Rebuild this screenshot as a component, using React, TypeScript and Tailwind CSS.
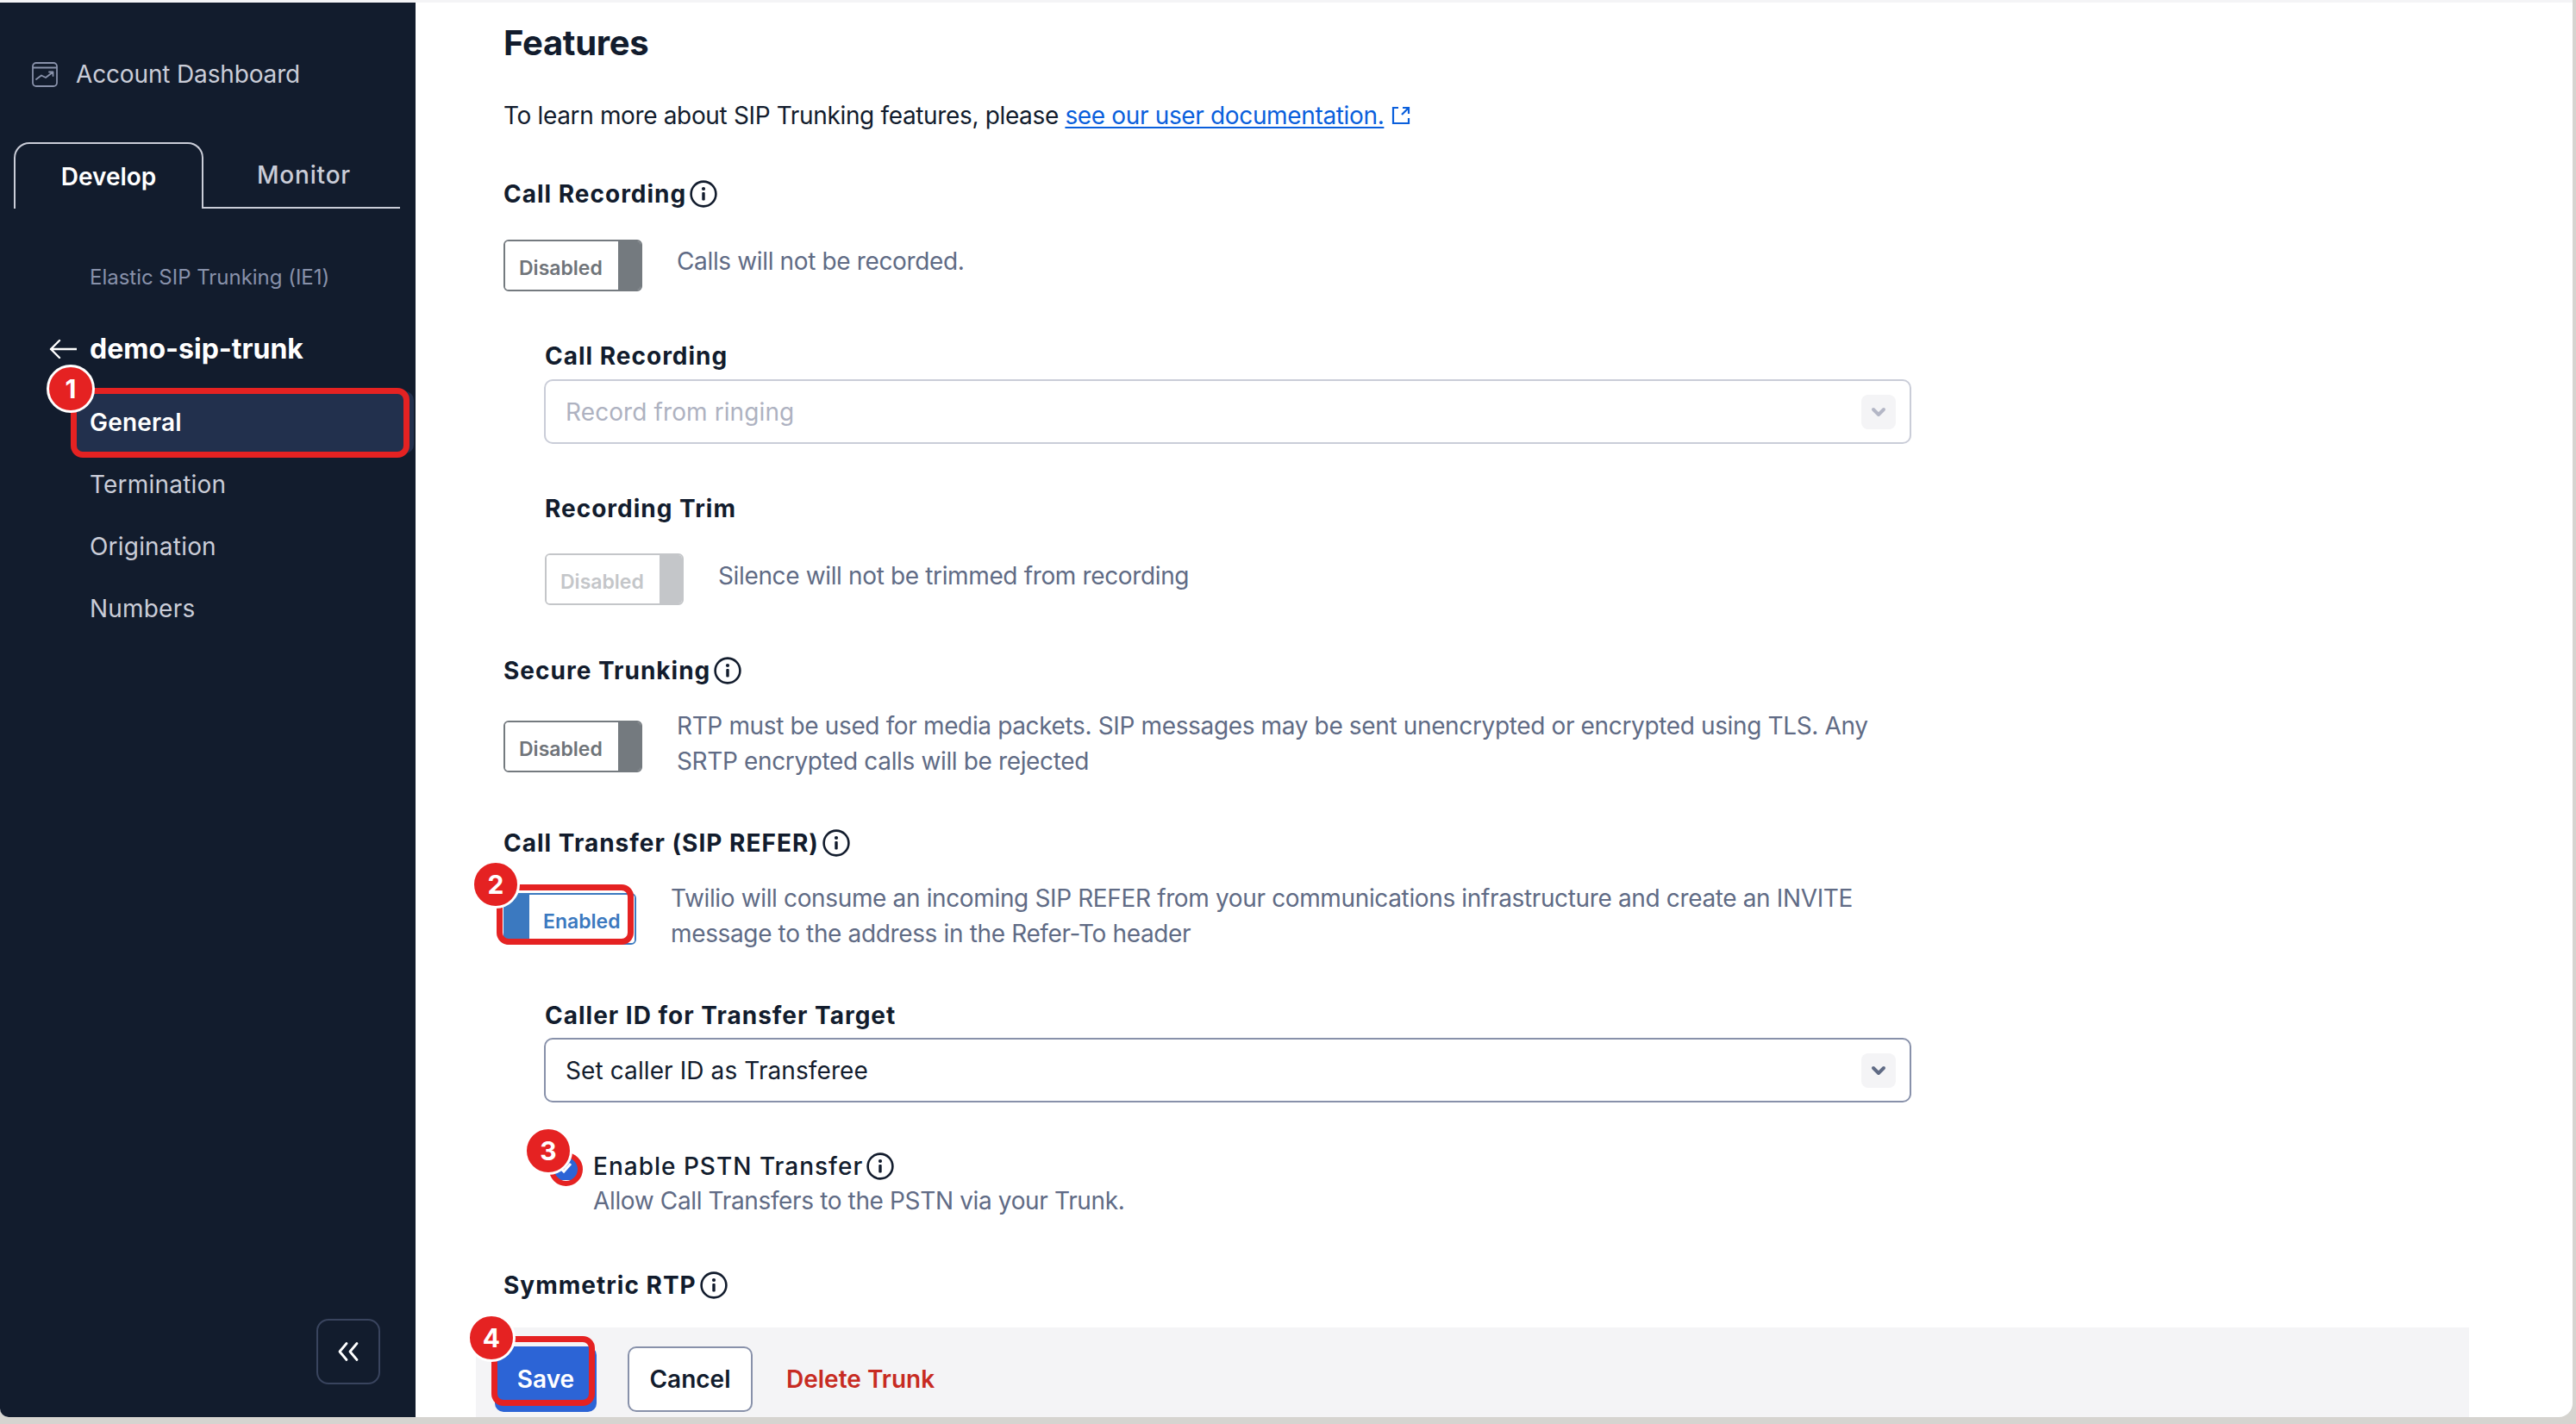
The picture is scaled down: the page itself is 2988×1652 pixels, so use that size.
import React from "react";

const Info = () => (
  <svg viewBox="0 0 32 32" className="w-[32px] h-[32px] shrink-0" fill="none">
    <circle cx="16" cy="16" r="14.4" stroke="#121c2d" strokeWidth="2.6" />
    <rect x="14.3" y="14" width="3.4" height="9.5" rx="1" fill="#121c2d" />
    <circle cx="16" cy="10" r="2.1" fill="#121c2d" />
  </svg>
);

const Chevron = ({ color }: { color: string }) => (
  <svg viewBox="0 0 20 14" className="w-[18px] h-[12px]" fill="none">
    <path d="M3 3.5l7 7 7-7" stroke={color} strokeWidth="4.6" strokeLinecap="round" strokeLinejoin="round" />
  </svg>
);

const Label = ({ children, info, className = "" }: { children: React.ReactNode; info?: boolean; className?: string }) => (
  <div className={`flex items-center gap-[4px] h-[40px] text-[28px] font-bold tracking-[1px] text-[#121c2d] ${className}`}>
    <span>{children}</span>
    {info && <Info />}
  </div>
);

const Toggle = ({ faded }: { faded?: boolean }) => (
  <div
    className={`flex w-[161px] h-[60px] shrink-0 rounded-[6px] border-2 overflow-hidden ${
      faded ? "border-[#c4c6c9]" : "border-[#747a7f]"
    }`}
  >
    <div
      className={`flex-1 pt-[11px] pl-[16px] text-[23px] font-semibold leading-[40px] bg-white ${
        faded ? "text-[#c4c6c9]" : "text-[#6f7479]"
      }`}
    >
      Disabled
    </div>
    <div className={`w-[26px] ${faded ? "bg-[#c4c6c9]" : "bg-[#747a7f]"}`} />
  </div>
);

const Select = ({ value, disabled }: { value: string; disabled?: boolean }) => (
  <div
    className={`ml-[47px] w-[1586px] h-[75px] rounded-[10px] border-2 bg-white flex items-center justify-between pl-[23px] pr-[16px] text-[28px] tracking-[0.1px] ${
      disabled ? "border-[#cacdd8] text-[#aeb2c1]" : "border-[#8891aa] text-[#121c2d]"
    }`}
  >
    <span>{value}</span>
    <span className="w-[40px] h-[40px] rounded-[8px] bg-[#f4f4f6] flex items-center justify-center">
      <Chevron color={disabled ? "#b4b7c6" : "#606b85"} />
    </span>
  </div>
);

const Badge = ({ n, className }: { n: string; className: string }) => (
  <div
    className={`absolute w-[56px] h-[56px] rounded-full bg-[#e52222] border-[3px] border-white text-white text-[30px] font-bold flex items-center justify-center ${className}`}
  >
    {n}
  </div>
);

const Desc = ({ children, className = "" }: { children: React.ReactNode; className?: string }) => (
  <div className={`text-[28px] leading-[41px] tracking-[-0.36px] text-[#606b85] ${className}`}>{children}</div>
);

export default function App() {
  return (
    <div
      className="relative w-[2988px] h-[1652px] overflow-hidden bg-[#d6d4d0] text-[#121c2d]"
      style={{ fontFamily: '"Inter", "Liberation Sans", sans-serif' }}
    >
      <div className="w-[2984px] h-[1644px] flex bg-white border-t-[3px] border-[#f4f4f6] rounded-br-[16px] rounded-bl-[10px] overflow-hidden">
        {/* Sidebar */}
        <aside className="w-[482px] shrink-0 h-full bg-[#121c2d] flex flex-col">
          <div className="mt-[63px] ml-[37px] h-[40px] flex items-center gap-[21px] text-[28px] tracking-[-0.15px] text-[#cacdd8]">
            <svg viewBox="0 0 30 29" className="w-[30px] h-[29px]" fill="none" stroke="#8891aa" strokeWidth="1.8">
              <rect x="1" y="1" width="28" height="27" rx="4" />
              <path d="M1 6.5h28" />
              <path d="M5 20l6-4.5 5 2.5 8-6M20 11.5h4.5V16" strokeLinecap="round" strokeLinejoin="round" />
            </svg>
            <span>Account Dashboard</span>
          </div>
          <div className="mt-[59px] ml-[16px] w-[448px] h-[76px] flex text-[28px] font-medium">
            <div className="w-[220px] h-[77px] rounded-t-[18px] border-2 border-b-0 border-[#cacdd8] flex items-center justify-center text-white font-semibold">
              Develop
            </div>
            <div className="flex-1 h-[77px] border-b-2 border-[#cacdd8] flex items-center justify-center pl-[5px] tracking-[0.8px] text-[#cacdd8]">
              Monitor
            </div>
          </div>
          <div className="mt-[61px] ml-[104px] h-[40px] flex items-center text-[24px] tracking-[-0.02px] text-[#8891aa]">
            Elastic SIP Trunking (IE1)
          </div>
          <div className="mt-[43px] ml-[57px] h-[40px] flex items-center gap-[15px] text-[32px] font-bold text-white">
            <svg viewBox="0 0 32 24" className="w-[32px] h-[24px]" fill="none" stroke="#ffffff" strokeWidth="2.4">
              <path d="M32 12H2M12 2L2 12l10 10" strokeLinejoin="round" strokeLinecap="round" />
            </svg>
            <span>demo-sip-trunk</span>
          </div>
          <nav className="mt-[29px] ml-[85px] w-[395px] flex flex-col text-[28px] tracking-[0.2px] text-[#cacdd8]">
            <div className="h-[72px] rounded-[10px] bg-[#22304d] pl-[19px] flex items-center font-semibold text-white">General</div>
            <div className="h-[72px] pl-[19px] flex items-center">Termination</div>
            <div className="h-[72px] pl-[19px] flex items-center">Origination</div>
            <div className="h-[72px] pl-[19px] flex items-center">Numbers</div>
          </nav>
          <div className="mt-auto mb-[38px] ml-[367px] w-[74px] h-[76px] rounded-[14px] border-2 border-[#39445e] flex items-center justify-center">
            <svg viewBox="0 0 26 24" className="w-[26px] h-[24px]" fill="none" stroke="#ffffff" strokeWidth="2.8" strokeLinecap="round" strokeLinejoin="round">
              <path d="M11 2.5L3 12l8 9.5M23 2.5L15 12l8 9.5" />
            </svg>
          </div>
        </aside>

        {/* Main */}
        <main className="flex-1 h-full flex flex-col min-w-0">
          <div className="flex-1 min-h-0 pl-[102px] pt-[17px]">
            <div className="h-[60px] flex items-center text-[40px] font-bold tracking-[-0.3px]">Features</div>
            <div className="mt-[34px] h-[40px] flex items-center text-[28px] tracking-[-0.35px] text-[#121c2d]">
              <span>To learn more about SIP Trunking features, please&nbsp;</span>
              <span className="text-[#0a5fdc] underline underline-offset-[3px]">see our user documentation.</span>
              <svg viewBox="0 0 24 24" className="ml-[8px] w-[24px] h-[24px]" fill="none" stroke="#0a5fdc" strokeWidth="2.2">
                <path d="M9 3H3v18h18v-6M13 11l8-8M14 3h7v7" />
              </svg>
            </div>

            <Label info className="mt-[51px]">Call Recording</Label>
            <div className="mt-[33px] h-[60px] flex gap-[40px]">
              <Toggle />
              <Desc className="mt-[5px]">Calls will not be recorded.</Desc>
            </div>

            <Label className="mt-[55px] ml-[48px]">Call Recording</Label>
            <div className="mt-[7px]"><Select value="Record from ringing" disabled /></div>

            <Label className="mt-[55px] ml-[48px]">Recording Trim</Label>
            <div className="mt-[32px] ml-[48px] h-[60px] flex gap-[40px]">
              <Toggle faded />
              <Desc className="mt-[6px]">Silence will not be trimmed from recording</Desc>
            </div>

            <Label info className="mt-[56px]">Secure Trunking</Label>
            <div className="mt-[38px] h-[60px] flex gap-[40px]">
              <Toggle />
              <Desc className="-mt-[14px] w-[1410px]">
                RTP must be used for media packets. SIP messages may be sent unencrypted or encrypted using TLS. Any SRTP encrypted calls will be rejected
              </Desc>
            </div>

            <Label info className="mt-[62px]">Call Transfer (SIP REFER)</Label>
            <div className="mt-[38px] h-[60px] flex gap-[40px]">
              <div className="flex w-[154px] h-[60px] shrink-0 rounded-[6px] border-2 border-[#3b79c0] overflow-hidden">
                <div className="w-[28px] bg-[#3b79c0]" />
                <div className="flex-1 pt-[11px] pl-[16px] text-[23px] font-semibold leading-[40px] bg-white text-[#3b79c0]">Enabled</div>
              </div>
              <Desc className="-mt-[14px] w-[1410px]">
                Twilio will consume an incoming SIP REFER from your communications infrastructure and create an INVITE message to the address in the Refer-To header
              </Desc>
            </div>

            <Label className="mt-[62px] ml-[48px]">Caller ID for Transfer Target</Label>
            <div className="mt-[6px]"><Select value="Set caller ID as Transferee" /></div>

            <div className="mt-[54px] ml-[58px] flex gap-[18px]">
              <div className="mt-[8px] w-[28px] h-[28px] rounded-[6px] bg-[#2c64d6] flex items-center justify-center">
                <svg viewBox="0 0 20 20" className="w-[20px] h-[20px]" fill="none" stroke="#ffffff" strokeWidth="3">
                  <path d="M4 10l4 4 8-9" />
                </svg>
              </div>
              <div>
                <div className="h-[40px] flex items-center gap-[4px] text-[28px] font-medium tracking-[1px]">
                  <span>Enable PSTN Transfer</span>
                  <Info />
                </div>
                <Desc className="leading-[40px]">Allow Call Transfers to the PSTN via your Trunk.</Desc>
              </div>
            </div>

            <Label info className="mt-[57px]">Symmetric RTP</Label>
          </div>

          <div className="h-[104px] shrink-0 ml-[70px] mr-[120px] bg-[#f4f4f6] pt-[22px] pl-[22px] flex items-start text-[28px] font-semibold">
            <div className="w-[118px] h-[76px] rounded-[10px] bg-[#2c64d6] text-white flex items-center justify-center">Save</div>
            <div className="ml-[36px] w-[145px] h-[76px] rounded-[10px] bg-white border-2 border-[#8891aa] flex items-center justify-center">Cancel</div>
            <div className="ml-[39px] h-[76px] flex items-center text-[#c72b22]">Delete Trunk</div>
          </div>
        </main>
      </div>

      {/* Annotations */}
      <div className="absolute left-[82px] top-[450px] w-[393px] h-[81px] rounded-[14px] border-[7px] border-[#e52222]" />
      <Badge n="1" className="left-[54px] top-[423px]" />
      <div className="absolute left-[576px] top-[1026px] w-[159px] h-[70px] rounded-[14px] border-[7px] border-[#e52222]" />
      <Badge n="2" className="left-[547px] top-[998px]" />
      <div className="absolute left-[637px] top-[1337px] w-[39px] h-[39px] rounded-full border-[6px] border-[#e52222]" />
      <Badge n="3" className="left-[608px] top-[1307px]" />
      <div className="absolute left-[570px] top-[1550px] w-[120px] h-[81px] rounded-[14px] border-[7px] border-[#e52222]" />
      <Badge n="4" className="left-[542px] top-[1524px]" />
    </div>
  );
}
